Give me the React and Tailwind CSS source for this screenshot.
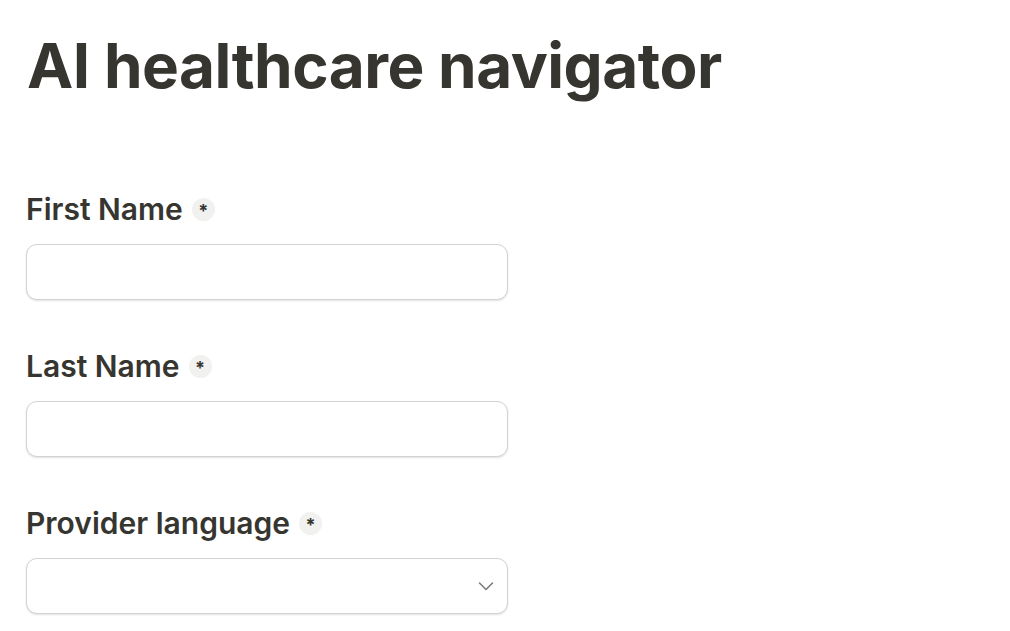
import React from "react";

function Label({ children }) {
  return (
    <div className="flex items-center gap-[9px] h-[34px]">
      <span className="text-[30px] font-semibold text-[#373530] leading-none tracking-normal">{children}</span>
      <span className="w-[23px] h-[23px] rounded-full bg-[#f1f1ef] flex items-center justify-center text-[18px] font-bold text-[#373530] leading-none pt-[3px]">*</span>
    </div>
  );
}

function Field({ label, select }) {
  return (
    <div className="flex flex-col">
      <Label>{label}</Label>
      <div className="mt-[18px] w-[482px] h-[56px] rounded-[11px] border border-[#d3d3d1] bg-white shadow-[0_1px_2px_rgba(0,0,0,0.12)] flex items-center justify-end pr-[13px]">
        {select && (
          <svg width="16" height="16" viewBox="0 0 16 16" fill="none" stroke="#7d7d7b" strokeWidth="1.6" strokeLinecap="round" strokeLinejoin="round">
            <path d="M1.5 5l6.5 6.5 6.5-6.5" />
          </svg>
        )}
      </div>
    </div>
  );
}

export default function App() {
  return (
    <div className="min-h-[631px] bg-white px-[26px] pt-[28px]" style={{ fontFamily: "Inter, 'Noto Sans', sans-serif" }}>
      <h1 className="text-[62px] font-bold text-[#373530] leading-[76px] tracking-[-0.5px] pl-[1px]">AI healthcare navigator</h1>
      <div className="mt-[88px] flex flex-col gap-[49px]">
        <Field label="First Name" />
        <Field label="Last Name" />
        <Field label="Provider language" select />
      </div>
    </div>
  );
}
